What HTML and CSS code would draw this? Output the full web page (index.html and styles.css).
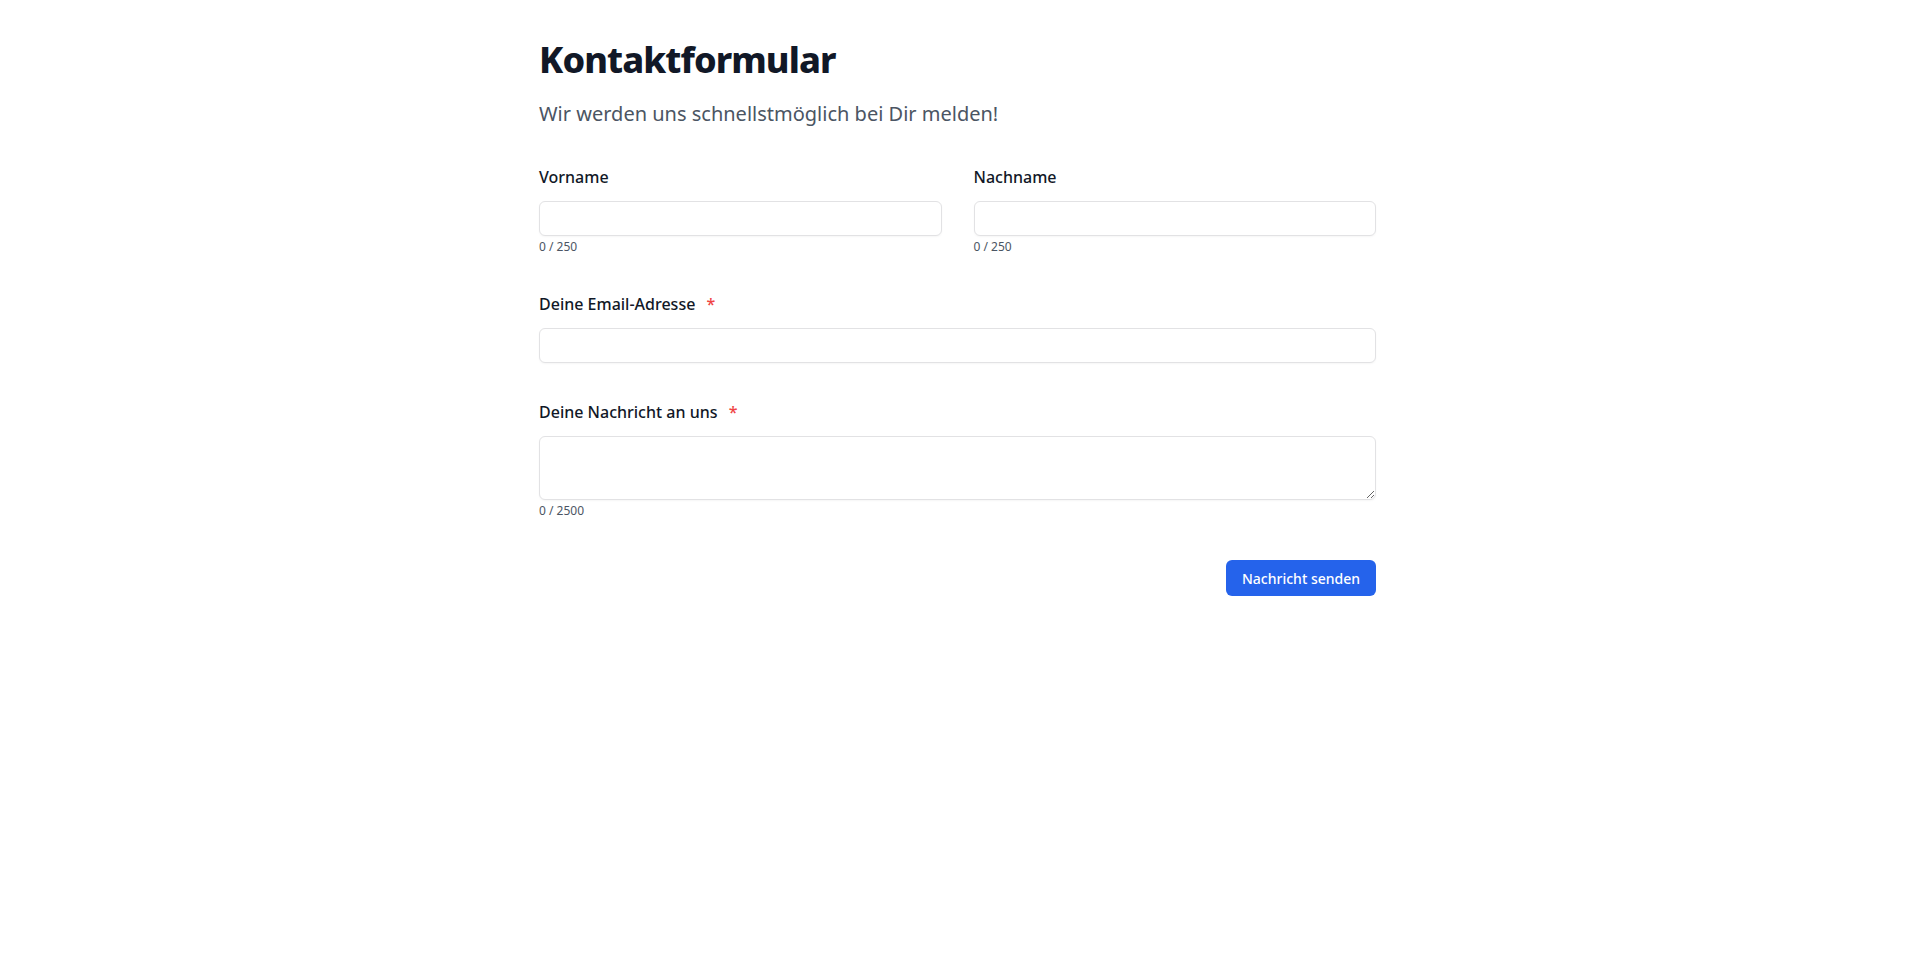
FILE: index.html
```html
<!DOCTYPE html>
<html lang="de">
<head>
  <meta charset="UTF-8" />
  <title>Kontaktformular</title>
  <link rel="stylesheet" href="styles.css">
</head>
<body>
  <main class="container">
    <h1 class="title">Kontaktformular</h1>
    <p class="subtitle">Wir werden uns schnellstmöglich bei Dir melden!</p>

    <form class="contact-form" onsubmit="return false;">
      <div class="row">
        <div class="field">
          <label for="firstName">Vorname</label>
          <input type="text" id="firstName" maxlength="250" />
          <div class="counter">0 / 250</div>
        </div>
        <div class="field">
          <label for="lastName">Nachname</label>
          <input type="text" id="lastName" maxlength="250" />
          <div class="counter">0 / 250</div>
        </div>
      </div>

      <div class="field">
        <label for="email">Deine Email-Adresse <span class="required">*</span></label>
        <input type="email" id="email" />
      </div>

      <div class="field">
        <label for="message">Deine Nachricht an uns <span class="required">*</span></label>
        <textarea id="message" maxlength="2500"></textarea>
        <div class="counter">0 / 2500</div>
      </div>

      <div class="actions">
        <button type="submit" class="submit">Nachricht senden</button>
      </div>
    </form>
  </main>
</body>
</html>
```

FILE: styles.css
```css
html, body { margin: 0; padding: 0; background: #fff; }
body { font-family: "Noto Sans", "Open Sans", sans-serif; color: #111827; }

.container { width: 837px; margin: 0 auto; padding-top: 40px; }

.title { margin: 0; font-size: 36px; line-height: 40px; font-weight: 800; letter-spacing: -0.025em; color: #111827; }
.subtitle { margin: 20px 0 0; font-size: 20px; line-height: 28px; color: #4b5563; }

.contact-form { margin-top: 37px; display: flex; flex-direction: column; gap: 37px; }
.row { display: grid; grid-template-columns: 1fr 1fr; gap: 32px; }
.field { display: flex; flex-direction: column; }

label { font-size: 16px; line-height: 24px; font-weight: 500; color: #111827; }
.required { color: #ef4444; margin-left: 7px; }

input, textarea {
  margin-top: 12px;
  box-sizing: border-box;
  width: 100%;
  border: 1px solid #e2e2e4;
  border-radius: 6px;
  background: #fff;
  font: inherit;
  box-shadow: 0 1px 2px rgba(0, 0, 0, 0.04);
}
input { height: 35px; padding: 0 12px; }
textarea { height: 64px; padding: 8px 12px; resize: vertical; display: block; }

.counter { margin-top: 3px; font-size: 12px; line-height: 16px; color: #4b5563; }

.actions { display: flex; justify-content: flex-end; margin-top: 4px; }
.submit {
  height: 36px;
  padding: 0 16px;
  border: none;
  border-radius: 6px;
  background: #2563eb;
  color: #fff;
  font-family: inherit;
  font-size: 14px;
  font-weight: 500;
  cursor: pointer;
}
```
